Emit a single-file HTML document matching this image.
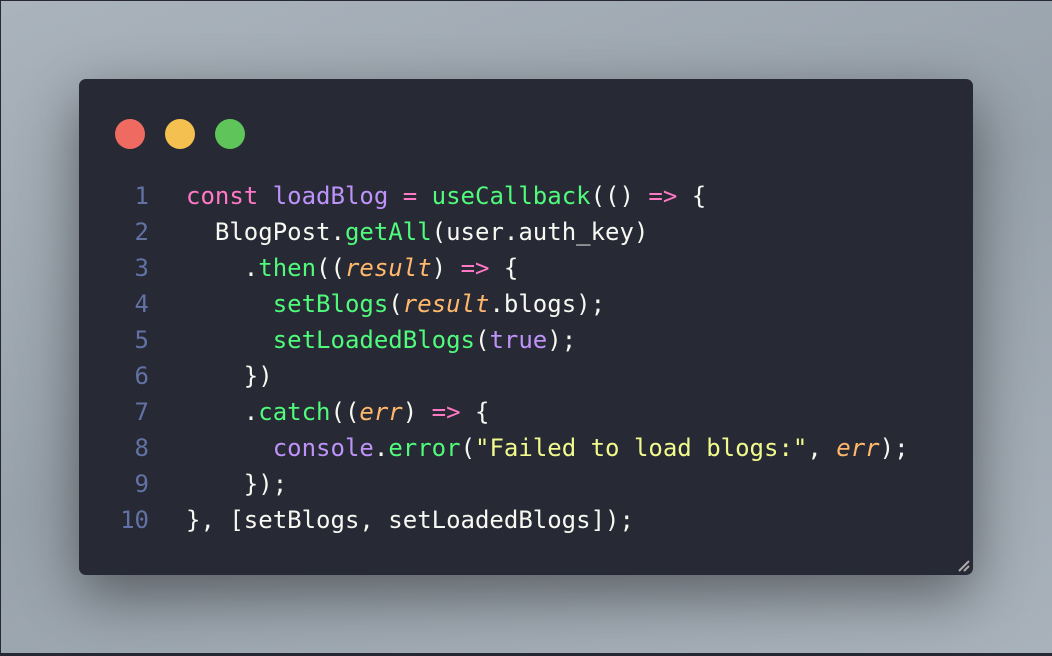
<!DOCTYPE html>
<html><head><meta charset="utf-8"><style>
html,body{margin:0;padding:0}
body{width:1052px;height:656px;overflow:hidden;position:relative;background:#262833}
.bg{position:absolute;left:1px;top:1px;width:1051px;height:652px;background:linear-gradient(160deg,#aab3bc 0%,#98a2ab 50%,#a9b2bb 100%)}
.card{position:absolute;left:79px;top:79px;width:894px;height:496px;background:#272935;border-radius:7px;box-shadow:0 20px 60px rgba(0,0,0,0.45)}
.dot{position:absolute;top:40px;width:30px;height:30px;border-radius:50%}
pre{position:absolute;margin:0;font-family:"DejaVu Sans Mono","Liberation Mono",monospace;font-size:24px;line-height:36px;color:#f8f8f2}
.ln{left:28px;top:99px;width:42px;text-align:right;color:#6272a4}
.code{left:107px;top:99px}
.k{color:#ff79c6}.v{color:#bd93f9}.f{color:#50fa7b}.p{color:#ffb86c;font-style:italic}.s{color:#f1fa8c}
</style></head><body>
<div class="bg"></div>
<div class="card">
<div class="dot" style="left:36px;background:#ef6b61"></div>
<div class="dot" style="left:86px;background:#f4c150"></div>
<div class="dot" style="left:136px;background:#5fc55a"></div>
<pre class="ln">1
2
3
4
5
6
7
8
9
10</pre>
<pre class="code"><span class="k">const</span> <span class="v">loadBlog</span> <span class="k">=</span> <span class="f">useCallback</span>(() <span class="k">=&gt;</span> {
  BlogPost.<span class="f">getAll</span>(user.auth_key)
    .<span class="f">then</span>((<span class="p">result</span>) <span class="k">=&gt;</span> {
      <span class="f">setBlogs</span>(<span class="p">result</span>.blogs);
      <span class="f">setLoadedBlogs</span>(<span class="v">true</span>);
    })
    .<span class="f">catch</span>((<span class="p">err</span>) <span class="k">=&gt;</span> {
      <span class="v">console</span>.<span class="f">error</span>(<span class="s">"Failed to load blogs:"</span>, <span class="p">err</span>);
    });
}, [setBlogs, setLoadedBlogs]);</pre>
<svg style="position:absolute;right:2px;bottom:2px" width="14" height="14"><path d="M2 12 L12 2 M7 12 L12 7" stroke="#aaa" stroke-width="2"/></svg>
</div>
</body></html>
